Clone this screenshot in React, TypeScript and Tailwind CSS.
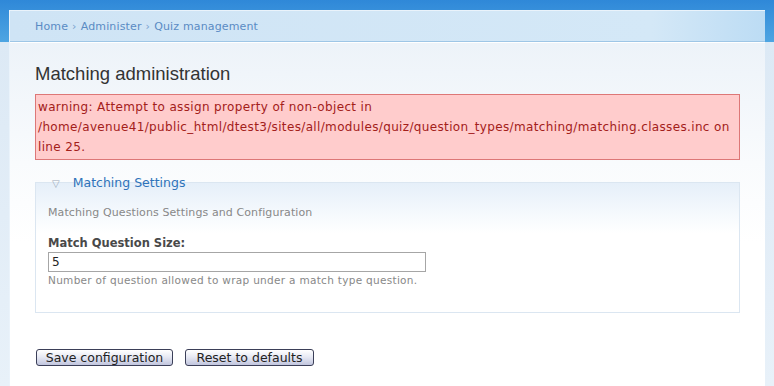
import React from "react";

export default function App() {
  return (
    <div
      className="w-[774px] h-[386px] overflow-hidden pt-[10px] px-[9px] bg-[linear-gradient(to_bottom,#2f88d8_0px,#4da5e2_42px,#dce9f5_42px,#e8f1f9_386px)]"
      style={{ fontFamily: '"DejaVu Sans", Verdana, sans-serif' }}
    >
      <div className="w-[756px] h-[376px] border-l border-t border-[#eaf3fb] flex flex-col">
        {/* breadcrumb */}
        <div className="h-[31px] shrink-0 flex items-center pl-[25px] pt-[3px] bg-[linear-gradient(to_right,#cfe4f5,#d4e8f7_85%,#bcdcf4)] border-b border-[#9ec6e6] text-[11px] tracking-[0.15px] text-[#5a8bc4]">
          <span>Home</span>
          <span className="mx-[4px] text-[#7aa2cf]">›</span>
          <span>Administer</span>
          <span className="mx-[4px] text-[#7aa2cf]">›</span>
          <span>Quiz management</span>
        </div>
        <div className="flex-1 border-t border-white bg-[linear-gradient(to_bottom,#edf3f9,#f9fbfd_120px,#ffffff_200px)] pl-[25px] pr-[24px] pt-[20px]">
          <h1
            className="text-[18.5px] leading-[22px] text-[#333] mb-[9px]"
            style={{ fontFamily: '"Liberation Sans", Arial, sans-serif' }}
          >
            Matching administration
          </h1>
          <div className="w-[705px] border border-[#d77] bg-[#ffcccc] text-[#a3201a] text-[12px] tracking-[0.35px] leading-[20px] pl-[2px] pt-[2px] pb-[2px] whitespace-nowrap">
            warning: Attempt to assign property of non-object in
            <br />
            /home/avenue41/public_html/dtest3/sites/all/modules/quiz/question_types/matching/matching.classes.inc on
            <br />
            line 25.
          </div>

          {/* fieldset */}
          <div className="relative w-[705px] h-[131px] mt-[22px] border border-[#dbe6f1] bg-[linear-gradient(to_bottom,#e6eff9,#f5f9fd_30px,#ffffff_50px)] pl-[12px] pt-[20px]">
            <div className="absolute left-[10px] top-[-9px] h-[18px] flex items-center pl-[6px] pr-[4px] text-[12.5px]">
              <span className="text-[#9aa8b8] text-[10px] mr-[13px]">▽</span>
              <span className="text-[#2e73ba]">Matching Settings</span>
            </div>
            <div className="text-[11px] tracking-[0.1px] text-[#888] leading-[20px]">
              Matching Questions Settings and Configuration
            </div>
            <div className="mt-[11px] text-[11.5px] font-bold text-[#494949] leading-[18px]">
              Match Question Size:
            </div>
            <div className="mt-[0px] w-[378px] h-[20px] border border-[#a6a6a6] bg-white text-[12px] leading-[18px] pl-[3px] text-[#222]">
              5
            </div>
            <div className="text-[10.5px] text-[#888] leading-[17px] tracking-[0.3px]">
              Number of question allowed to wrap under a match type question.
            </div>
          </div>

          <div className="flex gap-[12px] mt-[36px] ml-[1px]">
            <button className="w-[137px] h-[17px] rounded-[3px] border border-[#3b3f58] bg-[linear-gradient(to_bottom,#ffffff,#e8eaf4_45%,#c1c5de)] text-[12.5px] leading-[14px] text-[#222]">
              Save configuration
            </button>
            <button className="w-[129px] h-[17px] rounded-[3px] border border-[#3b3f58] bg-[linear-gradient(to_bottom,#ffffff,#e8eaf4_45%,#c1c5de)] text-[12.5px] leading-[14px] text-[#222]">
              Reset to defaults
            </button>
          </div>
        </div>
      </div>
    </div>
  );
}
